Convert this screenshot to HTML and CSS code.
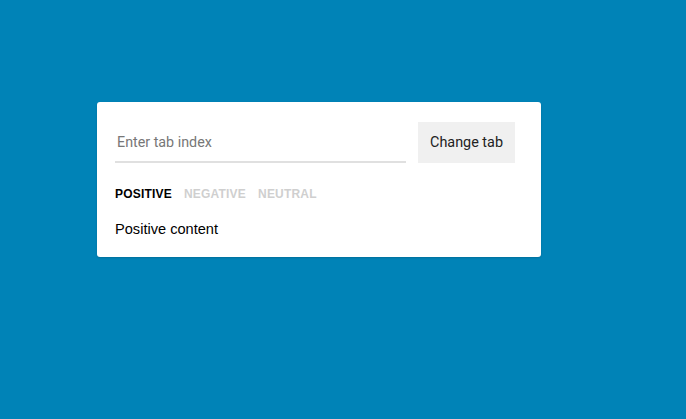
FILE: index.html
```html
<!DOCTYPE html>
<html>
<head>
<meta charset="utf-8">
<link rel="stylesheet" href="styles.css">
</head>
<body>
<div class="page">
  <div class="card">
    <div class="row">
      <div class="field"><input class="input" type="text" placeholder="Enter tab index"></div>
      <button class="btn">Change tab</button>
    </div>
    <div class="tabs">
      <span class="tab active">POSITIVE</span>
      <span class="tab">NEGATIVE</span>
      <span class="tab">NEUTRAL</span>
    </div>
    <div class="content">Positive content</div>
  </div>
</div>
</body>
</html>
```
FILE: styles.css
```css
html, body {
  margin: 0;
  padding: 0;
  background: #0083b7;
  height: 100%;
}
.page {
  padding: 102px 0 0 97px;
  font-family: Roboto, "Noto Sans", sans-serif;
}
.card {
  width: 400px;
  background: #fff;
  border-radius: 3px;
  padding: 20px 26px 18px 18px;
  box-shadow: 0 1px 2px rgba(0,0,0,0.15);
}
.row {
  display: flex;
  gap: 12px;
  align-items: flex-start;
}
.field {
  flex: 1;
  height: 39px;
  border-bottom: 2px solid #e0e0e0;
  display: flex;
  align-items: center;
}
.input {
  border: 0;
  outline: 0;
  padding: 0 0 0 2px;
  width: 100%;
  font-family: Roboto, sans-serif;
  font-size: 14.3px;
  color: #333;
  background: transparent;
}
.input::placeholder {
  color: #777;
}
.btn {
  width: 97px;
  height: 41px;
  border: 0;
  background: #f0f0f0;
  font-family: Roboto, sans-serif;
  font-size: 14.4px;
  color: #222;
  padding: 0;
}
.tabs {
  display: flex;
  gap: 12px;
  margin-top: 24px;
  line-height: 14px;
  font-family: "Liberation Sans", Arial, sans-serif;
}
.tab {
  font-size: 12px;
  font-weight: 700;
  letter-spacing: 0.2px;
  color: #cfcfcf;
}
.tab.active {
  color: #000;
}
.content {
  margin-top: 18px;
  font-family: "Liberation Sans", Arial, sans-serif;
  font-size: 14.6px;
  line-height: 20px;
  color: #000;
}
```
